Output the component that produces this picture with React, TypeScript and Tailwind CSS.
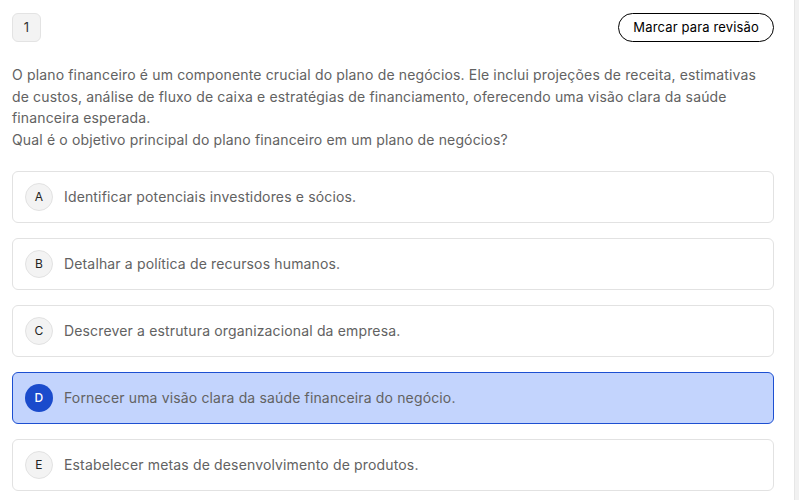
import React, { useState } from 'react';

const options = [
  { key: 'A', text: 'Identificar potenciais investidores e sócios.' },
  { key: 'B', text: 'Detalhar a política de recursos humanos.' },
  { key: 'C', text: 'Descrever a estrutura organizacional da empresa.' },
  { key: 'D', text: 'Fornecer uma visão clara da saúde financeira do negócio.' },
  { key: 'E', text: 'Estabelecer metas de desenvolvimento de produtos.' },
];

export default function App() {
  const [selected, setSelected] = useState('D');

  return (
    <div className="flex min-h-[500px] w-[799px] bg-white font-['Inter','Noto_Sans',sans-serif] tracking-[0.15px]">
      <div className="flex-1 pl-3 pr-5 pt-[13px]">
        {/* Question header */}
        <div className="flex items-center justify-between">
          <div className="flex h-[29px] w-[29px] items-center justify-center rounded-md border border-[#e3e3e3] bg-[#f3f3f3] text-[13px] text-[#333]">
            1
          </div>
          <button className="flex h-[29px] items-center rounded-full border border-black px-[14px] text-[13px] text-black">
            Marcar para revisão
          </button>
        </div>

        {/* Statement */}
        <div className="mt-[22px] text-[14px] leading-[21.7px] text-[#626262]">
          <p>
            O plano financeiro é um componente crucial do plano de negócios. Ele inclui projeções de receita, estimativas
            de custos, análise de fluxo de caixa e estratégias de financiamento, oferecendo uma visão clara da saúde
            financeira esperada.
          </p>
          <p>Qual é o objetivo principal do plano financeiro em um plano de negócios?</p>
        </div>

        {/* Alternatives */}
        <div className="mt-[20px] flex flex-col gap-[15px]">
          {options.map((opt) => {
            const active = opt.key === selected;
            return (
              <button
                key={opt.key}
                onClick={() => setSelected(opt.key)}
                className={
                  active
                    ? 'flex h-[52px] items-center gap-[11px] rounded-md border border-[#1d4fd1] bg-[#c3d4fd] px-3 text-left'
                    : 'flex h-[52px] items-center gap-[11px] rounded-md border border-[#e2e2e2] bg-white px-3 text-left'
                }
              >
                <span
                  className={
                    active
                      ? 'flex h-7 w-7 items-center justify-center rounded-full bg-[#1a4bcc] text-[12px] font-medium text-white'
                      : 'flex h-7 w-7 items-center justify-center rounded-full border border-[#e2e2e2] bg-[#f3f3f3] text-[12px] text-[#222]'
                  }
                >
                  {opt.key}
                </span>
                <span className="text-[14px] text-[#626262]">{opt.text}</span>
              </button>
            );
          })}
        </div>
      </div>
      <div className="w-[5px] border-l border-[#e6e6e6] bg-[#f1f1f1]" />
    </div>
  );
}
